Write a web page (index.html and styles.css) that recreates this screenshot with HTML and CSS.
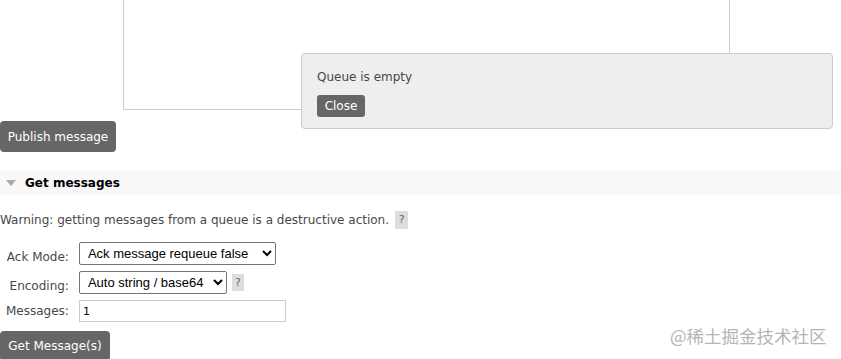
FILE: index.html
```html
<html>
<head>
<title>Queue</title>
<link rel="stylesheet" href="styles.css">
</head>
<body>
<div class="publish">
  <div class="payload-box"></div>
  <button class="btn btn-publish">Publish message</button>
</div>

<div class="section">
  <h2 class="section-head"><span class="arrow"></span>Get messages</h2>
  <div class="section-body">
    <p class="warning">Warning: getting messages from a queue is a destructive action. <span class="help">?</span></p>
    <table class="form">
      <tr>
        <th>Ack Mode:</th>
        <td>
          <select class="sel-ack">
            <option>Ack message requeue false</option>
          </select>
        </td>
      </tr>
      <tr>
        <th>Encoding:</th>
        <td>
          <select class="sel-enc">
            <option>Auto string / base64</option>
          </select>
          <span class="help help-sm">?</span>
        </td>
      </tr>
      <tr>
        <th>Messages:</th>
        <td><input class="txt" type="text" value="1"></td>
      </tr>
    </table>
    <button class="btn btn-get">Get Message(s)</button>
  </div>
</div>

<div class="popup">
  <p>Queue is empty</p>
  <button class="btn btn-close">Close</button>
</div>

<div class="watermark">@稀土掘金技术社区</div>
</body>
</html>
```

FILE: styles.css
```css
body { margin:0; color:#484848; font-family:"DejaVu Sans", Verdana, sans-serif; font-size:12px; background:#fff; overflow:hidden; }
p { margin:0; }

.publish { padding-bottom:18px; }
.payload-box { margin-left:123px; width:605px; height:109px; border:1px solid #ccc; border-top:none; }

.btn { display:block; border:none; background:#666; color:#fff; font-family:"DejaVu Sans", Verdana, sans-serif; font-size:12px; border-radius:4px; cursor:pointer; }
.btn-publish { margin-top:11px; height:31px; width:116px; padding:0; }
.btn-get { margin-top:9px; height:30px; width:110px; padding:0; }
.btn-close { height:22px; width:48px; padding:0; border-radius:3px; font-size:12px; }

.section-head { margin:0; height:25px; background:#f8f8f8; color:#000; font-size:12px; font-weight:bold; display:flex; align-items:center; padding-left:6px; }
.arrow { width:0; height:0; border-left:5px solid transparent; border-right:5px solid transparent; border-top:6px solid #aaa; margin-right:9px; margin-top:1px; }

.section-body { padding-top:15px; }
.warning { display:flex; align-items:center; gap:6px; height:19px; }
.help { display:inline-block; background:#ddd; color:#666; width:13px; height:18px; line-height:18px; text-align:center; font-size:11px; }
.help-sm { width:12px; height:17px; line-height:17px; margin-left:5px; }

.form { border-collapse:collapse; margin-top:13px; font-family:"DejaVu Sans", Verdana, sans-serif; font-size:12px; }
.form th { font-weight:normal; text-align:right; padding:0 10px 0 6px; color:#484848; }
.form td { padding:0 0 6px 0; display:flex; align-items:center; }
.form tr:last-child td { padding-bottom:0; }
select { font-family:"Liberation Sans", Arial, sans-serif; font-size:13px; color:#000; height:23px; border:1px solid #767676; border-radius:2px; background:#fff; padding:0 2px 0 4px; }
.sel-ack { width:197px; }
.sel-enc { width:148px; }
.txt { width:207px; height:22px; border:1px solid #ccc; font-family:"DejaVu Sans", Verdana, sans-serif; font-size:11px; color:#000; padding:0 3px; box-sizing:border-box; }

.popup { position:absolute; left:301px; top:53px; width:500px; height:74px; padding:0 15px; background:#eee; border:1px solid #ccc; border-radius:4px; }
.popup p { margin:16px 0 11px 0; font-size:12px; color:#484848; }

.watermark { position:absolute; left:670px; top:323px; font-family:"Noto Sans CJK SC", sans-serif; font-size:17.5px; color:#b5b5b5; }
```
